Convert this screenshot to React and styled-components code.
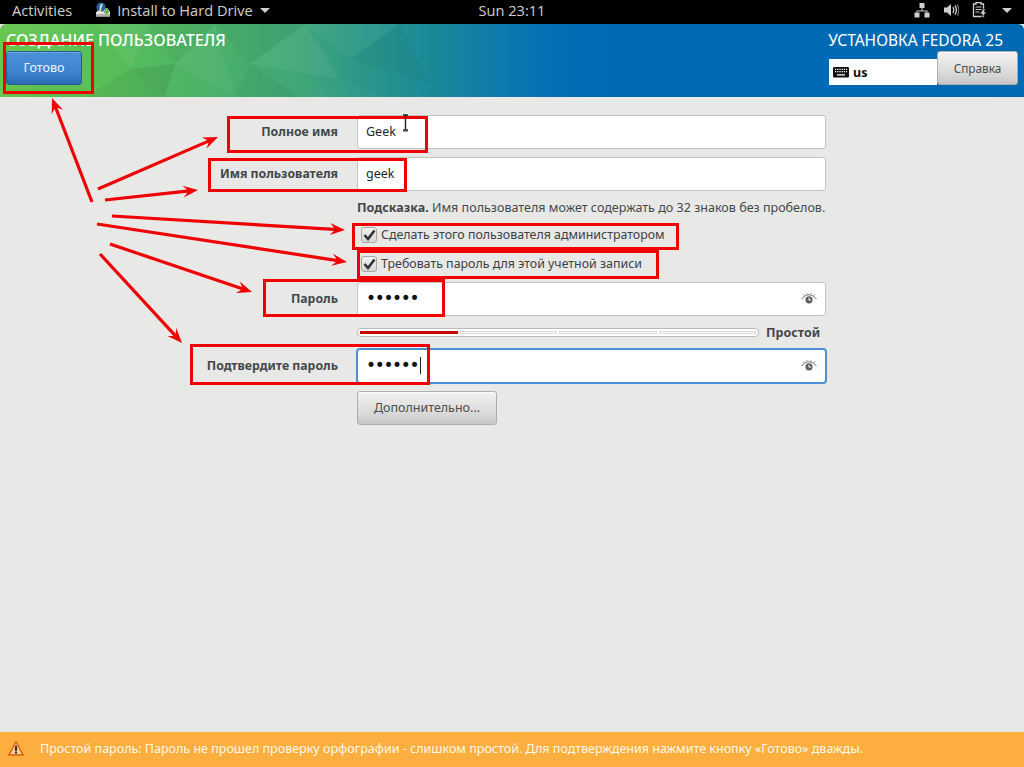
import React from 'react';
import styled, { createGlobalStyle } from 'styled-components';

const Global = createGlobalStyle`
  html, body { margin: 0; padding: 0; height: 100%; background: #e8e8e7; }
  #root { height: 100%; }
  * { box-sizing: border-box; }
`;

const FONT = `"Noto Sans", "Open Sans", sans-serif`;

const Page = styled.div`
  position: relative;
  display: flex;
  flex-direction: column;
  height: 100vh;
  overflow: hidden;
  font-family: ${FONT};
  color: #2e3436;
  background: #e8e8e7;
`;

const TopBar = styled.div`
  display: grid;
  grid-template-columns: 1fr auto 1fr;
  align-items: center;
  height: 24px;
  flex: none;
  padding: 0 12px 4px;
  background: #000;
  color: #cfd0cd;
  font-family: "Open Sans", sans-serif;
  font-size: 14.6px;
`;

const TopLeft = styled.div`
  display: flex;
  align-items: center;
`;

const AppMenu = styled.div`
  display: flex;
  align-items: center;
  gap: 6px;
  margin-left: 23px;
`;

const Caret = styled.span`
  width: 0;
  height: 0;
  margin-left: 1px;
  border-left: 5px solid transparent;
  border-right: 5px solid transparent;
  border-top: 5px solid #cfd0cd;
`;

const Clock = styled.div`
  text-align: center;
`;

const Tray = styled.div`
  display: flex;
  align-items: center;
  justify-content: flex-end;
  gap: 13px;
  margin-right: -2px;
  padding-right: 2px;
`;

const Header = styled.header`
  position: relative;
  display: flex;
  justify-content: space-between;
  flex: none;
  height: 73px;
  padding: 6px 6px 0;
  overflow: hidden;
  border-radius: 6px 6px 0 0;
  background: linear-gradient(90deg, #66c84e 0%, #58bf58 10%, #4cb268 20%, #3fa57a 30%, #2f9a85 34%, #1a8a98 42%, #0f7cab 48%, #0670b3 53%, #006cb5 57%, #0069b4 100%);
`;

const Poly = styled.svg`
  position: absolute;
  left: 0;
  top: 0;
  pointer-events: none;
`;

const HeaderCol = styled.div`
  position: relative;
  display: flex;
  flex-direction: column;
  align-items: ${p => (p.$right ? 'flex-end' : 'flex-start')};
`;

const Title = styled.div`
  height: 21px;
  color: #fff;
  font-size: 15.5px;
  line-height: 21px;
  margin-right: 15px;
  white-space: nowrap;
`;

const ScreenTitle = styled(Title)`
  margin-right: 0;
  font-size: 16.2px;
  font-weight: 500;
`;

const Button = styled.div`
  display: flex;
  align-items: center;
  justify-content: center;
  height: 34px;
  padding-bottom: 1px;
  border-radius: 3px;
  font-size: 12.5px;
  border: 1px solid #aeaeab;
  color: #4a4f50;
  background: linear-gradient(180deg, #f2f2f1 0%, #d8d8d6 70%, #c6c6c4 100%);
  box-shadow: inset 0 1px 0 #fafafa;
`;

const DoneButton = styled(Button)`
  width: 76px;
  color: #f0f5fb;
  border-color: #2a5c93;
  background: linear-gradient(180deg, #4a90d9 0%, #3f84cf 60%, #2c6bb3 100%);
  box-shadow: inset 0 1px 0 #6ba5e2;
`;

const LangRow = styled.div`
  display: flex;
  align-items: flex-end;
  height: 34px;
`;

const Lang = styled.div`
  display: flex;
  align-items: center;
  gap: 4px;
  width: 108px;
  height: 26px;
  padding-left: 4px;
  background: #fff;
  color: #111;
  font-size: 12.5px;
  font-weight: 700;
`;

const HelpButton = styled(Button)`
  width: 81px;
  font-size: 11.8px;
`;

const Main = styled.main`
  flex: 1;
  padding-top: 18px;
`;

const Form = styled.div`
  display: grid;
  grid-template-columns: 338px 469px;
  column-gap: 19px;
  align-items: center;
`;

const Label = styled.div`
  grid-column: 1;
  align-self: start;
  height: 34px;
  padding-bottom: 2px;
  display: flex;
  align-items: center;
  justify-content: flex-end;
  font-size: 12.3px;
  font-weight: 700;
  color: #43484a;
`;

const Field = styled.div`
  grid-column: 2;
  position: relative;
  display: flex;
  align-items: center;
  justify-content: space-between;
  height: 34px;
  padding: 0 8px 2px 8px;
  margin-bottom: ${p => p.$mb || 0}px;
  background: #fff;
  border-radius: 3px;
  border: 1px solid ${p => (p.$focus ? '#4a90d9' : '#c2c2bf')};
  box-shadow: ${p => (p.$focus ? '0 0 0 1px #4a90d9' : 'none')};
  font-size: 12.5px;
  color: #1f2325;
`;

const Dots = styled.span`
  display: flex;
  align-items: center;
  font-family: "DejaVu Sans", sans-serif;
  font-size: 17px;
  letter-spacing: -1.32px;
  color: #111;
`;

const TextCaret = styled.span`
  width: 1px;
  height: 17px;
  margin-left: 2px;
  background: #222;
`;

const Hint = styled.div`
  grid-column: 2;
  height: 29px;
  padding-top: 8px;
  font-size: 12.55px;
  line-height: 17px;
  color: #43484a;
  white-space: nowrap;
  b { font-weight: 700; }
`;

const CheckRow = styled.div`
  grid-column: 2;
  display: flex;
  align-items: center;
  gap: 4px;
  height: 29px;
  padding-left: 4px;
  margin-bottom: ${p => p.$mb || 0}px;
  font-size: 12.4px;
  color: #3c4143;
`;

const Box = styled.span`
  display: flex;
  align-items: center;
  justify-content: center;
  width: 16px;
  height: 16px;
  border: 1px solid #a7a7a4;
  border-radius: 3px;
  background: linear-gradient(180deg, #f2f2f1, #d6d6d4);
`;

const StrengthRow = styled.div`
  grid-column: 2;
  display: flex;
  align-items: center;
  gap: 7px;
  height: 33px;
  font-size: 12.5px;
  font-weight: 700;
  color: #43484a;
`;

const Meter = styled.div`
  display: grid;
  grid-template-columns: repeat(4, 1fr);
  gap: 2px;
  width: 402px;
  height: 9px;
  padding: 2px;
  background: #fff;
  border: 1px solid #b9b9b6;
  border-radius: 4px;
`;

const MeterCell = styled.div`
  background: ${p => (p.$on ? '#cc0000' : '#fff')};
  border: ${p => (p.$on ? 'none' : '1px solid #d9d9d7')};
`;

const MoreButton = styled(Button)`
  grid-column: 2;
  width: 140px;
  margin-top: 8px;
  font-size: 12.5px;
`;

const Footer = styled.footer`
  display: flex;
  align-items: center;
  gap: 16px;
  flex: none;
  height: 35px;
  padding: 0 0 2px 8px;
  background: #fcae3f;
  color: #fff8ea;
  font-size: 12.53px;
`;

const Overlay = styled.svg`
  position: absolute;
  left: 0;
  top: 0;
  pointer-events: none;
`;

const EyeSvg = styled.svg`
  margin-top: 2px;
`;

const Arrow = ({ d }) => <path d={d} />;

const arrows = [
  [92, 202, 52, 98],
  [98, 189, 218, 137],
  [105, 200, 198, 190],
  [112, 216, 345, 230],
  [97, 224, 347, 262],
  [110, 244, 252, 292],
  [100, 254, 182, 343],
];

function arrowPath([x1, y1, x2, y2]) {
  const a = Math.atan2(y2 - y1, x2 - x1);
  const L = 15, W = 6, N = 11;
  const px = -Math.sin(a), py = Math.cos(a);
  const bx = x2 - L * Math.cos(a), by = y2 - L * Math.sin(a);
  const nx = x2 - N * Math.cos(a), ny = y2 - N * Math.sin(a);
  const t = 1.6;
  return `M${x1 + px * t} ${y1 + py * t}L${nx + px * t} ${ny + py * t}L${bx + px * W} ${by + py * W}L${x2} ${y2}L${bx - px * W} ${by - py * W}L${nx - px * t} ${ny - py * t}L${x1 - px * t} ${y1 - py * t}Z`;
}

const rects = [
  [3, 42, 94, 94],
  [227, 116, 428, 153],
  [208, 158, 407, 192],
  [352, 223, 679, 250],
  [357, 250, 659, 279],
  [263, 279, 445, 317],
  [190, 344, 430, 385],
];

const Eye = () => (
  <EyeSvg width="16" height="12" viewBox="0 0 16 12">
    <path d="M0.5 6.2C3 3 5.4 1.8 8 1.8S13 3 15.5 6.2" fill="none" stroke="#6a6f70" strokeWidth="1" />
    <path d="M3.2 2.6L2.2 1.4M12.8 2.6L13.8 1.4M6 1.2L5.7 .2M10 1.2L10.3 .2" stroke="#6a6f70" strokeWidth=".9" />
    <circle cx="8" cy="6.8" r="3.6" fill="#5b6061" />
    <path d="M8 4.8v2.3h1.9" fill="none" stroke="#fff" strokeWidth="1" />
  </EyeSvg>
);

const Check = () => (
  <svg width="13" height="12" viewBox="0 0 13 12">
    <path d="M1.5 6L5 10L11.5 1.5" fill="none" stroke="#2e3436" strokeWidth="2.6" />
  </svg>
);

const Keyboard = () => (
  <svg width="16" height="12" viewBox="0 0 16 12">
    <rect x="0" y="1" width="16" height="10.5" rx="1.2" fill="#111" />
    <path d="M2 3.4h12M2 5.6h12" stroke="#fff" strokeWidth="1.1" strokeDasharray="1.2 1" />
    <path d="M4 8.8h8" stroke="#fff" strokeWidth="1.3" />
  </svg>
);

const Network = () => (
  <svg width="16" height="16" viewBox="0 0 16 16" fill="#cfd0cd">
    <rect x="5.5" y="1" width="5" height="5" />
    <rect x="0.5" y="10.5" width="5" height="5" />
    <rect x="10.5" y="10.5" width="5" height="5" />
    <path d="M7.5 6h1v2.5h5v2h-1v-1h-9v1h-1v-2h5z" />
  </svg>
);

const Volume = () => (
  <svg width="16" height="16" viewBox="0 0 16 16" fill="none">
    <path d="M1 5.5h3L8 2v12L4 10.5H1z" fill="#cfd0cd" />
    <path d="M10 5c1 1.8 1 4.2 0 6M12 3.5c1.7 2.6 1.7 6.4 0 9" stroke="#cfd0cd" strokeWidth="1.4" />
    <path d="M14.2 2.5c2 3.2 2 7.8 0 11" stroke="#777" strokeWidth="1.2" />
  </svg>
);

const Battery = () => (
  <svg width="16" height="16" viewBox="0 0 16 16" fill="none">
    <path d="M4 0.5h5v1.5h2.5v12.5H1.5V2H4z" stroke="#cfd0cd" strokeWidth="1.3" />
    <path d="M3.5 5h6M3.5 7.5h6M3.5 10h4" stroke="#cfd0cd" strokeWidth="1.2" />
    <path d="M11 7L8 12h2.5L9.5 16l5-6H12l1.5-3z" fill="#cfd0cd" stroke="#000" strokeWidth=".6" />
  </svg>
);

const Installer = () => (
  <svg width="16" height="16" viewBox="0 0 16 16">
    <path d="M2 10l1-3h10l2 3v4.5H1V10z" fill="#dfe5e4" />
    <rect x="1" y="12" width="14" height="2.5" fill="#a9b2b0" />
    <circle cx="6" cy="5" r="4.6" fill="#2a5f9e" />
    <text x="4.2" y="8.2" fontSize="8.5" fontWeight="700" fontStyle="italic" fill="#fff" fontFamily="'Liberation Serif', serif">f</text>
    <path d="M10 6h3v3h2.2l-3.7 3.8L8 9h2z" fill="#6fb04a" />
  </svg>
);

const Warning = () => (
  <svg width="16" height="15" viewBox="0 0 16 15">
    <path d="M8 1L15.2 14H.8z" fill="#f7c98d" stroke="#d65a10" strokeWidth="1.4" strokeLinejoin="round" />
    <rect x="7" y="4.8" width="2" height="5" fill="#3a2a1a" />
    <rect x="7" y="10.6" width="2" height="2" fill="#3a2a1a" />
  </svg>
);

const facets = [
  ['0,0 90,0 45,40', 0.03],
  ['0,73 45,40 85,73', -0.02],
  ['95,0 150,0 130,45', 0.05],
  ['85,73 130,45 165,73', -0.05],
  ['150,0 215,0 175,40', -0.03],
  ['130,45 175,40 165,73', -0.07],
  ['175,40 215,0 235,73', 0.04],
  ['215,0 305,0 250,40', -0.03],
  ['235,73 250,40 300,73', -0.04],
  ['250,40 305,0 340,55', 0.05],
  ['300,73 340,55 390,73', 0.02],
  ['305,0 400,0 350,35', 0.04],
  ['350,35 400,0 430,60', -0.03],
];

export default function App() {
  return (
    <Page>
      <Global />
      <TopBar>
        <TopLeft>
          <span>Activities</span>
          <AppMenu>
            <Installer />
            <span>Install to Hard Drive</span>
            <Caret />
          </AppMenu>
        </TopLeft>
        <Clock>Sun 23:11</Clock>
        <Tray>
          <Network />
          <Volume />
          <Battery />
          <Caret />
        </Tray>
      </TopBar>

      <Header>
        <Poly width="500" height="73" viewBox="0 0 500 73">
          {facets.map(([pts, v], i) => (
            <polygon key={i} points={pts} fill={v > 0 ? '#fff' : '#000'} opacity={Math.abs(v)} />
          ))}
        </Poly>
        <HeaderCol>
          <ScreenTitle>СОЗДАНИЕ ПОЛЬЗОВАТЕЛЯ</ScreenTitle>
          <DoneButton>Готово</DoneButton>
        </HeaderCol>
        <HeaderCol $right>
          <Title>УСТАНОВКА FEDORA 25</Title>
          <LangRow>
            <Lang>
              <Keyboard />
              us
            </Lang>
            <HelpButton>Справка</HelpButton>
          </LangRow>
        </HeaderCol>
      </Header>

      <Main>
        <Form>
          <Label>Полное имя</Label>
          <Field $mb={8}>Geek</Field>
          <Label>Имя пользователя</Label>
          <Field>geek</Field>
          <Hint>
            <b>Подсказка.</b> Имя пользователя может содержать до 32 знаков без пробелов.
          </Hint>
          <CheckRow>
            <Box><Check /></Box>
            Сделать этого пользователя администратором
          </CheckRow>
          <CheckRow $mb={4}>
            <Box><Check /></Box>
            Требовать пароль для этой учетной записи
          </CheckRow>
          <Label>Пароль</Label>
          <Field>
            <Dots>••••••</Dots>
            <Eye />
          </Field>
          <StrengthRow>
            <Meter>
              <MeterCell $on />
              <MeterCell />
              <MeterCell />
              <MeterCell />
            </Meter>
            Простой
          </StrengthRow>
          <Label>Подтвердите пароль</Label>
          <Field $focus>
            <Dots>••••••<TextCaret /></Dots>
            <Eye />
          </Field>
          <MoreButton>Дополнительно...</MoreButton>
        </Form>
      </Main>

      <Footer>
        <Warning />
        Простой пароль: Пароль не прошел проверку орфографии - слишком простой. Для подтверждения нажмите кнопку «Готово» дважды.
      </Footer>

      <Overlay width="1024" height="767" viewBox="0 0 1024 767">
        {rects.map(([x1, y1, x2, y2], i) => (
          <rect key={i} x={x1 + 1.5} y={y1 + 1.5} width={x2 - x1 - 3} height={y2 - y1 - 3} fill="none" stroke="#f00000" strokeWidth="3" />
        ))}
        <g fill="#f00000">
          {arrows.map((a, i) => <Arrow key={i} d={arrowPath(a)} />)}
        </g>
        <path d="M403 115h5M403 130h5M405.5 115v15" stroke="#222" strokeWidth="1.4" fill="none" />
        <path d="M403 131.5h5" stroke="#999" strokeWidth="1" />
      </Overlay>
    </Page>
  );
}
